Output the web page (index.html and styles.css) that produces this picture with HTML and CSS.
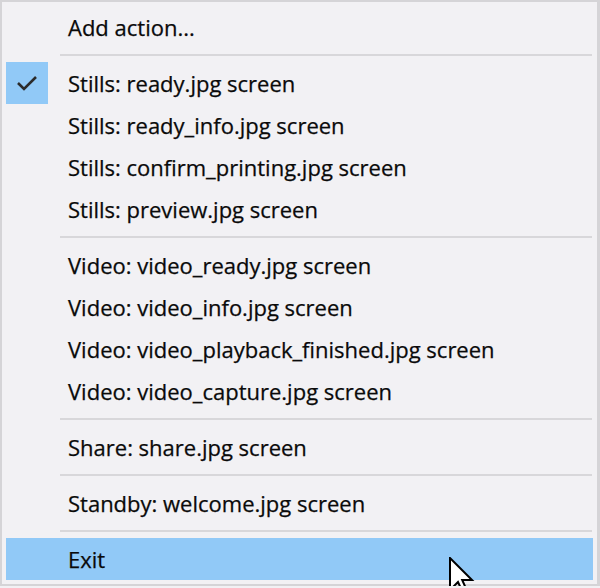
FILE: index.html
```html
<!DOCTYPE html>
<html lang="en">
<head>
  <meta charset="UTF-8" />
  <title>Tray menu</title>
  <link rel="stylesheet" href="styles.css">
</head>
<body>
  <div class="menu">
    <div class="item">Add action...</div>
    <div class="sep"></div>
    <div class="item checked">
      <span class="check">
        <svg width="22" height="16" viewBox="0 0 22 16"><path d="M2 8 L8 14 L20 2" fill="none" stroke="#2b2b2b" stroke-width="2.6"/></svg>
      </span>
      Stills: ready.jpg screen
    </div>
    <div class="item">Stills: ready_info.jpg screen</div>
    <div class="item">Stills: confirm_printing.jpg screen</div>
    <div class="item">Stills: preview.jpg screen</div>
    <div class="sep"></div>
    <div class="item">Video: video_ready.jpg screen</div>
    <div class="item">Video: video_info.jpg screen</div>
    <div class="item">Video: video_playback_finished.jpg screen</div>
    <div class="item">Video: video_capture.jpg screen</div>
    <div class="sep"></div>
    <div class="item">Share: share.jpg screen</div>
    <div class="sep"></div>
    <div class="item">Standby: welcome.jpg screen</div>
    <div class="sep"></div>
    <div class="item hover">Exit</div>
    <svg class="cursor" width="26" height="40" viewBox="0 0 13 20">
      <path d="M0.5 0.5 L0.5 16.5 L4.5 12.5 L7.5 19 L9.5 18 L6.6 11.5 L11.5 11.5 Z" fill="#fff" stroke="#000" stroke-width="1" stroke-linejoin="miter"/>
    </svg>
  </div>
</body>
</html>
```

FILE: styles.css
```css
body {
  margin: 0;
  padding: 0;
  background: #f2f1f4;
  font-family: 'Open Sans', 'Noto Sans', sans-serif;
  overflow: hidden;
}
.menu {
  position: relative;
  width: 600px;
  box-sizing: border-box;
  border: 2px solid #d5d4d7;
  border-right-width: 3px;
  padding: 4px 4px 4px 4px;
  background: #f2f1f4;
}
.item {
  position: relative;
  height: 42px;
  line-height: 42px;
  padding-left: 62px;
  font-size: 22px;
  color: #0a0a0a;
  -webkit-text-stroke: 0.25px #0a0a0a;
  white-space: nowrap;
}
.check {
  position: absolute;
  left: 0;
  top: 0;
  width: 42px;
  height: 42px;
  background: #91c9f7;
  display: flex;
  align-items: center;
  justify-content: center;
}
.hover {
  background: #91c9f7;
}
.sep {
  height: 14px;
  margin-left: 54px;
  margin-right: 1px;
  display: flex;
  align-items: center;
}
.sep::before {
  content: '';
  display: block;
  width: 100%;
  height: 2px;
  background: #d8d7da;
}
.cursor {
  position: absolute;
  left: 447px;
  top: 555px;
}
```
